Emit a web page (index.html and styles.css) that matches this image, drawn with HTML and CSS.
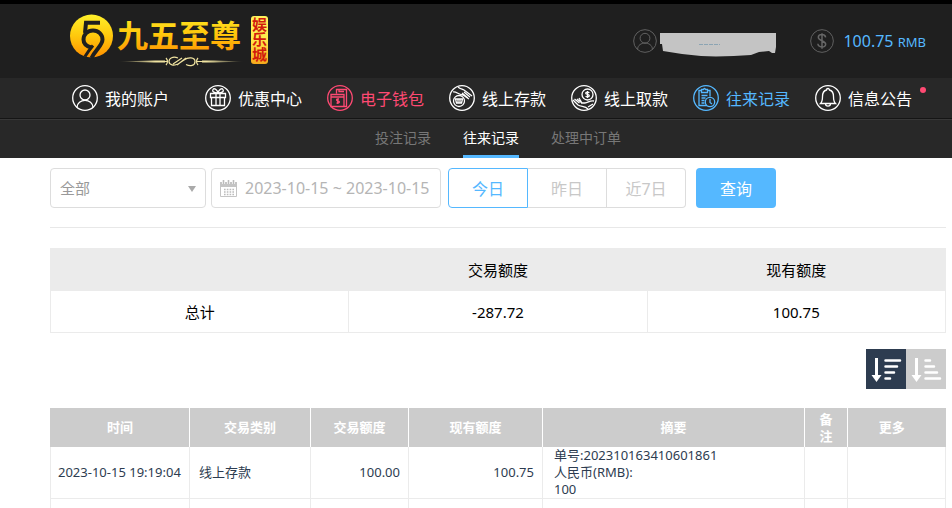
FILE: index.html
```html
<!DOCTYPE html>
<html lang="zh-CN">
<head>
<meta charset="utf-8">
<meta name="viewport" content="width=device-width, initial-scale=1">
<title>往来记录</title>
<link rel="stylesheet" href="styles.css">
</head>
<body>
<header class="site-header">
  <div class="topbar">
    <a class="logo" href="#">
      <svg width="200" height="54" viewBox="0 0 200 54" role="img" aria-label="九五至尊 娱乐城">
        <defs>
          <linearGradient id="gold" x1="0" y1="0" x2="0" y2="1">
            <stop offset="0" stop-color="#fff02a"/><stop offset=".5" stop-color="#ffc80c"/><stop offset="1" stop-color="#ff9000"/>
          </linearGradient>
          <linearGradient id="tag" x1="0" y1="0" x2="0" y2="1">
            <stop offset="0" stop-color="#fff35c"/><stop offset=".5" stop-color="#ffe94a"/><stop offset="1" stop-color="#f5a91c"/>
          </linearGradient>
          <linearGradient id="fade">
            <stop offset="0" stop-color="#f0e3a0" stop-opacity="0"/><stop offset=".3" stop-color="#f0e3a0"/><stop offset=".7" stop-color="#f0e3a0"/><stop offset="1" stop-color="#f0e3a0" stop-opacity="0"/>
          </linearGradient>
        </defs>
        <circle cx="21.500" cy="22" r="21.500" fill="url(#gold)"/>
        <g fill="none" stroke="#1f1f1f" stroke-width="4">
          <path d="M30 8.700H16L15 19"/>
          <path d="M21 33.500C16 32 13.500 29 13.500 25.500c0-5 4-9 9.500-9s9.500 4 9.500 9c0 6-7 10-11 18.500"/>
          <path d="M23 31.500c-2.500 3-5 6-8 11" stroke-width="3"/>
        </g>
        <text class="logo-name" x="47" y="33" fill="url(#gold)">九五至尊</text>
        <path d="M48 47.500l36-1h11v2H84zM174 47.500l-30-1h-12v2h12z" fill="url(#fade)"/>
        <g fill="none" stroke="#f0e3a0" stroke-width="1.200">
          <path d="M92 47.500h5m30 0h5M96 44q3 3.500 0 7M128 44q-3 3.500 0 7"/>
          <path d="M108 44c-5-2-9 0-9 3.500s5 4.500 9 2.500l6-4c4-3 11-3 11 1.500s-5 5-9 3M103 50l9-6M107 51l9-7"/>
        </g>
        <rect x="181" y="2" width="17" height="48" rx="3" fill="url(#tag)"/>
        <text class="logo-tag" x="182" y="16">娱</text>
        <text class="logo-tag" x="182" y="31">乐</text>
        <text class="logo-tag" x="182" y="46">城</text>
      </svg>
    </a>
    <div class="account">
      <svg class="round" viewBox="0 0 26 26" aria-hidden="true"><circle cx="13" cy="13" r="12.300"/><circle cx="13" cy="10" r="5.300"/><path d="M5 22c0-9 16-9 16 0"/></svg>
      <svg class="mask" viewBox="0 0 116 32" aria-hidden="true"><path d="M0 8h116v14l-1 6h-3l-3-2-10 1-8 3c-16 1-33 2-50 1L22 29 3 26 2 19H0z" fill="#c4c4c4"/><path d="M39 19.500h21" stroke="#8ba4b3" stroke-dasharray="4 1"/></svg>
    </div>
    <div class="balance">
      <svg class="round" viewBox="0 0 26 26" aria-hidden="true"><circle cx="13" cy="13" r="12.300"/><path d="M17 9c-1-4-8-4-8 0s8 3.500 8 7.500-8 4-8.500-.5M13 4.500v17" stroke-width="1.600"/></svg>
      <span class="amount">100.75 <small>RMB</small></span>
    </div>
  </div>
  <nav class="main-nav">
    <a class="first" href="#"><svg viewBox="0 0 26 26"><circle cx="13" cy="13" r="12.300"/><circle cx="13" cy="10" r="5"/><path d="M5 22.500c0-9.500 16-9.500 16 0"/></svg>我的账户</a>
    <a href="#"><svg viewBox="0 0 26 26"><circle cx="13" cy="13" r="12.300"/><path d="M5.500 8.500h15v4h-15zM6.500 12.500h13v8h-13zM11 8.500v12M15 8.500v12M13 8C8 8 7 6 8 4.500s4-.5 5 3.500c1-4 4-5 5-3.500S18 8 13 8z"/></svg>优惠中心</a>
    <a class="hot" href="#"><svg viewBox="0 0 26 26"><circle cx="13" cy="13" r="12.300"/><path d="M9.500 8.500v-4h10v17h-3M12 4.500v2h5M4 9.500h13v12H4zM4 12h13M12 14c-3-.5-3 1.700-1 2s2 2.300-1.500 2M10.700 13.500v5.500"/></svg>电子钱包</a>
    <a href="#"><svg viewBox="0 0 26 26"><circle cx="13" cy="13" r="12.300"/><circle cx="10" cy="16" r="5.500"/><path d="M6.500 14h7l-1 4h-5zM9 14v4M11 14v4M4 7c3-1 6 3 10 3 2 1 4 3 6 4M9 2c2 2 4 2 6 3l8 6M15 7l6 5M13 8l6 5"/></svg>线上存款</a>
    <a href="#"><svg viewBox="0 0 26 26"><circle cx="13" cy="13" r="12.300"/><circle cx="16.500" cy="9.500" r="5.500"/><path d="M18.300 8c-1-1.500-3.600-1-3.600.3s3.600.9 3.600 2.400-2.900 1.500-3.600.3M16.500 6v7M2 15l5 5c3 2 7 1 10 4M3.500 14l5 4M6 14l5 4-3-5M10 18h4c3 0 5-3 9-2M17 22l5-3"/></svg>线上取款</a>
    <a class="active" href="#"><svg viewBox="0 0 26 26"><circle cx="13" cy="13" r="12.300"/><path d="M8.500 5.500h-2.500v15h8M14.500 5.500H17v6M8.500 4.500h2q1-2 2 0h2v3h-6zM8.500 10.500h6M8.500 13h4M8.500 15.500h3M8.500 18h3M17 14v3.500l2 1.500"/><circle cx="17" cy="17" r="4.700"/></svg>往来记录</a>
    <a class="notice" href="#"><svg viewBox="0 0 26 26"><circle cx="13" cy="13" r="12.300"/><path d="M5.500 18.500h15q-2-2-2-7c0-4-2-6-4-6.500 0-2-3-2-3 0-2 .5-4 2.500-4 6.500q0 5-2 7zM10.500 18.500c0 3.500 5 3.500 5 0"/></svg>信息公告</a>
  </nav>
  <nav class="sub-nav">
    <a href="#">投注记录</a>
    <a class="current" href="#">往来记录</a>
    <a href="#">处理中订单</a>
  </nav>
</header>
<main class="content">
  <form class="filters">
    <div class="select-box">
      <select aria-label="交易类别"><option>全部</option></select>
    </div>
    <label class="date-box">
      <svg width="17" height="17" viewBox="0 0 17 17" aria-hidden="true"><path d="M0 2h17v5H0z" fill="#c4c4c4"/><path d="M.5 3v13.500h16V3" fill="none" stroke="#c4c4c4"/><path d="M3.500 0v4M8.500 0v4M13.500 0v4" stroke="#fff" stroke-width="3"/><path d="M3.500 0v4M8.500 0v4M13.500 0v4" stroke="#bbb" stroke-width="1.600"/><path d="M4 9.500h10M4 12h10M4 14.500h10" stroke="#bbb" stroke-width="1.500" stroke-dasharray="1.600 1.200"/></svg>
      <input type="text" value="2023-10-15 ~ 2023-10-15" aria-label="日期">
    </label>
    <div class="range">
      <button type="button" class="on">今日</button>
      <button type="button">昨日</button>
      <button type="button">近7日</button>
    </div>
    <button type="button" class="query">查询</button>
  </form>
  <table class="summary">
    <thead><tr><th></th><th>交易额度</th><th>现有额度</th></tr></thead>
    <tbody><tr><td>总计</td><td>-287.72</td><td>100.75</td></tr></tbody>
  </table>
  <div class="sorting">
    <button type="button" class="on" aria-label="降序"><svg viewBox="0 0 40 40"><path d="M10.500 9v20" stroke-width="3"/><path d="M5.500 26h10l-5 7z" fill="#fff" stroke="none"/><path d="M19.500 11.500H34M19.500 17.500H31M19.500 23.500h8.500M19.500 29.500H24" stroke-width="2.500" stroke-linecap="round"/></svg></button>
    <button type="button" aria-label="升序"><svg viewBox="0 0 40 40"><path d="M10.500 9v20" stroke-width="3"/><path d="M5.500 26h10l-5 7z" fill="#fff" stroke="none"/><path d="M19.500 11.500H24M19.500 17.500h8.500M19.500 23.500H31M19.500 29.500H34" stroke-width="2.500" stroke-linecap="round"/></svg></button>
  </div>
  <table class="records">
    <colgroup><col class="c-time"><col class="c-type"><col class="c-amount"><col class="c-balance"><col><col class="c-note"><col class="c-more"></colgroup>
    <thead><tr><th>时间</th><th>交易类别</th><th>交易额度</th><th>现有额度</th><th>摘要</th><th>备注</th><th class="more">更多</th></tr></thead>
    <tbody>
      <tr><td class="time">2023-10-15 19:19:04</td><td>线上存款</td><td class="num">100.00</td><td class="num">100.75</td><td class="detail">单号:202310163410601861<br>人民币(RMB):<br>100</td><td></td><td></td></tr>
      <tr class="blank"><td></td><td></td><td></td><td></td><td></td><td></td><td></td></tr>
    </tbody>
  </table>
</main>
</body>
</html>
```
FILE: styles.css
```css
* { box-sizing: border-box; }

body {
  margin: 0;
  background: #fff;
  color: #000;
  font-family: "Noto Sans", "Noto Sans CJK SC", sans-serif;
  font-size: 16px;
}

a { color: inherit; text-decoration: none; }
button, select, input { font: inherit; margin: 0; }
button { padding: 0; cursor: pointer; }

/* Header */
.site-header { background: #282828; border-top: 4px solid #000; }

.topbar {
  display: flex;
  align-items: center;
  height: 74px;
  padding: 0 26px 0 70px;
  background: #1f1f1f;
}
.logo { margin-right: auto; }
.logo svg { display: block; }
.logo-name { font-family: "Noto Sans CJK SC", sans-serif; font-size: 31px; font-weight: 700; }
.logo-tag { font-family: "Noto Sans CJK SC", sans-serif; font-size: 15px; font-weight: 700; fill: #d21b0c; }

.account, .balance { display: flex; align-items: center; }
.account { gap: 3px; margin-right: 34px; }
.balance { gap: 9px; color: #55b8ff; }
.round { width: 24px; height: 24px; fill: none; stroke: #666; }
.mask { width: 116px; height: 32px; }
.amount { line-height: 24px; }
.amount small { font-size: 13px; }

.main-nav {
  display: flex;
  gap: 25px;
  height: 41px;
  padding-left: 72px;
  border-bottom: 1px solid #151515;
  color: #fff;
}
.main-nav a {
  position: relative;
  display: flex;
  align-items: center;
  gap: 7px;
  white-space: nowrap;
}
.main-nav svg { width: 26px; height: 26px; fill: none; stroke: currentColor; stroke-width: 1.3; }
.main-nav .first { padding-right: 11px; }
.main-nav .hot { color: #ff4a73; }
.main-nav .active { color: #55b8ff; }
.notice::after {
  content: "";
  position: absolute;
  top: 9px;
  right: -14px;
  width: 6px;
  height: 6px;
  border-radius: 50%;
  background: #ff4a73;
}

.sub-nav {
  display: flex;
  justify-content: center;
  gap: 32px;
  height: 39px;
  padding-left: 44px;
  border-top: 1px solid #383838;
  color: #777;
  font-size: 14px;
  line-height: 35px;
}
.sub-nav a { border-bottom: 3px solid transparent; }
.sub-nav .current { color: #fff; border-color: #55b8ff; }

/* Filters */
.content { padding: 10px 6px 0 50px; }

.filters {
  display: flex;
  padding-bottom: 19px;
  margin-bottom: 20px;
  border-bottom: 1px solid #e8e8e8;
}
.select-box { position: relative; width: 156px; height: 40px; margin-right: 5px; }
.select-box select {
  appearance: none;
  width: 100%;
  height: 100%;
  padding: 0 9px;
  border: 1px solid #ddd;
  border-radius: 4px;
  background: #fff;
  color: #999;
  font-size: 15px;
}
.select-box::after {
  content: "";
  position: absolute;
  top: 18px;
  right: 10px;
  border: 4px solid transparent;
  border-top: 6px solid #aaa;
  border-bottom: 0;
  pointer-events: none;
}
.date-box {
  display: flex;
  align-items: center;
  gap: 8px;
  width: 230px;
  height: 40px;
  margin-right: 7px;
  padding-left: 8px;
  border: 1px solid #ddd;
  border-radius: 4px;
}
.date-box svg { flex: none; }
.date-box input {
  flex: 1;
  min-width: 0;
  padding: 0;
  border: 0;
  outline: 0;
  background: none;
  color: #b5b5b5;
}

.range { display: flex; margin-right: 10px; }
.range button {
  width: 79px;
  height: 40px;
  border: 1px solid #ddd;
  border-left: 0;
  background: #fff;
  color: #c8c8c8;
}
.range .on {
  width: 80px;
  border: 1px solid #55b8ff;
  border-radius: 4px 0 0 4px;
  color: #55b8ff;
}
.range button:last-child { border-radius: 0 4px 4px 0; }
.query {
  width: 80px;
  height: 40px;
  border: 0;
  border-radius: 4px;
  background: #55b8ff;
  color: #fff;
}

/* Tables */
table { width: 100%; border-collapse: collapse; table-layout: fixed; }
th, td { padding: 0; }

.summary { font-size: 15px; text-align: center; }
.summary th { height: 42px; border: 1px solid #ebebeb; background: #ebebeb; font-weight: 400; }
.summary td { height: 42px; border: 1px solid #ebebeb; }

.sorting { display: flex; justify-content: flex-end; margin: 16px 0 19px; }
.sorting button { width: 40px; height: 40px; border: 0; background: #ccc; }
.sorting .on { background: #2d3c50; }
.sorting svg { display: block; width: 40px; height: 40px; fill: none; stroke: #fff; }

.records { color: #2d3c50; font-size: 13px; line-height: 17px; }
.c-time { width: 139px; }
.c-type { width: 121px; }
.c-amount { width: 98px; }
.c-balance { width: 134px; }
.c-note { width: 43px; }
.c-more { width: 98px; }
.records th {
  height: 39px;
  padding: 2px 12px;
  border-left: 1px solid #fff;
  background: #ccc;
  color: #fff;
}
.records th:first-child { border-left-color: #ccc; }
.records .more { padding-right: 22px; }
.records td { height: 51px; padding: 0 9px; border: 1px solid #ebebeb; }
.records thead + tbody tr:first-child td { border-top: 0; }
.records .blank td { height: 9px; border-bottom: 0; }
.records .time { padding: 0 0 0 7px; white-space: nowrap; }
.records .num { padding-right: 8px; text-align: right; }
.records .detail { padding: 0 11px; }
```
